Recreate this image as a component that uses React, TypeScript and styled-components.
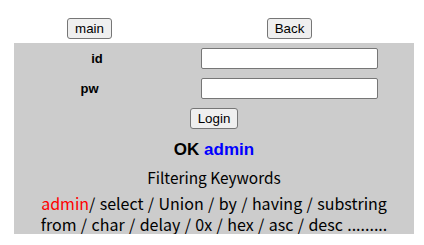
import React from "react";
import styled, { createGlobalStyle } from "styled-components";

const Global = createGlobalStyle`
  body {
    margin: 8px;
    font-family: "Liberation Sans", Arial, sans-serif;
    background: #ffffff;
    color: #000000;
  }
`;

const Page = styled.div`
  width: 400px;
  margin-left: 6px;
`;

const TopRow = styled.div`
  display: grid;
  grid-template-columns: 151px 249px;
  justify-items: center;
  align-items: start;
  height: 35px;
  padding-top: 10px;
  box-sizing: border-box;
`;

const Button = styled.button`
  font-family: "Liberation Sans", Arial, sans-serif;
  font-size: 13.333px;
  height: 21px;
  padding: 0 7px;
  background: #efefef;
  color: #000;
  border: 1px solid #767676;
  border-radius: 3px;
  line-height: 17px;
  box-sizing: border-box;
`;

const Panel = styled.div`
  background: #cccccc;
  height: 191px;
  padding-top: 5px;
  box-sizing: border-box;
  display: flex;
  flex-direction: column;
  align-items: stretch;
`;

const FieldRow = styled.div`
  display: grid;
  grid-template-columns: 151px 249px;
  align-items: center;
  height: 21px;
  margin-bottom: 9px;
`;

const Label = styled.div<{ $indent?: number }>`
  font-weight: bold;
  font-size: 13px;
  text-align: center;
  padding-left: ${(p) => p.$indent ?? 0}px;
`;

const Input = styled.input`
  justify-self: center;
  width: 177px;
  height: 21px;
  box-sizing: border-box;
  border: 1px solid #767676;
  border-radius: 2px;
  background: #fff;
  padding: 1px 2px;
`;

const Center = styled.div`
  display: flex;
  justify-content: center;
`;

const Status = styled.div`
  text-align: center;
  font-weight: bold;
  font-size: 17px;
  line-height: 20px;
  margin-top: 11px;
`;

const Blue = styled.span`
  color: #0000ff;
`;

const Heading = styled.div`
  text-align: center;
  font-family: "Noto Sans CJK KR", "Noto Sans", sans-serif;
  font-size: 15.4px;
  line-height: 21px;
  margin-top: 7px;
  color: #000;
`;

const Keywords = styled(Heading)`
  font-size: 16px;
  word-spacing: 0.8px;
  margin-top: 5px;
`;

const Red = styled.span`
  color: #ff0000;
`;

export default function App() {
  return (
    <>
      <Global />
      <Page>
        <TopRow>
          <Button>main</Button>
          <Button>Back</Button>
        </TopRow>
        <Panel>
          <FieldRow>
            <Label $indent={15}>id</Label>
            <Input type="text" />
          </FieldRow>
          <FieldRow>
            <Label>pw</Label>
            <Input type="password" />
          </FieldRow>
          <Center>
            <Button>Login</Button>
          </Center>
          <Status>
            OK <Blue>admin</Blue>
          </Status>
          <Heading>Filtering Keywords</Heading>
          <Keywords>
            <Red>admin</Red>/ select / Union / by / having / substring
            <br />
            from / char / delay / 0x / hex / asc / desc .........
          </Keywords>
        </Panel>
      </Page>
    </>
  );
}
